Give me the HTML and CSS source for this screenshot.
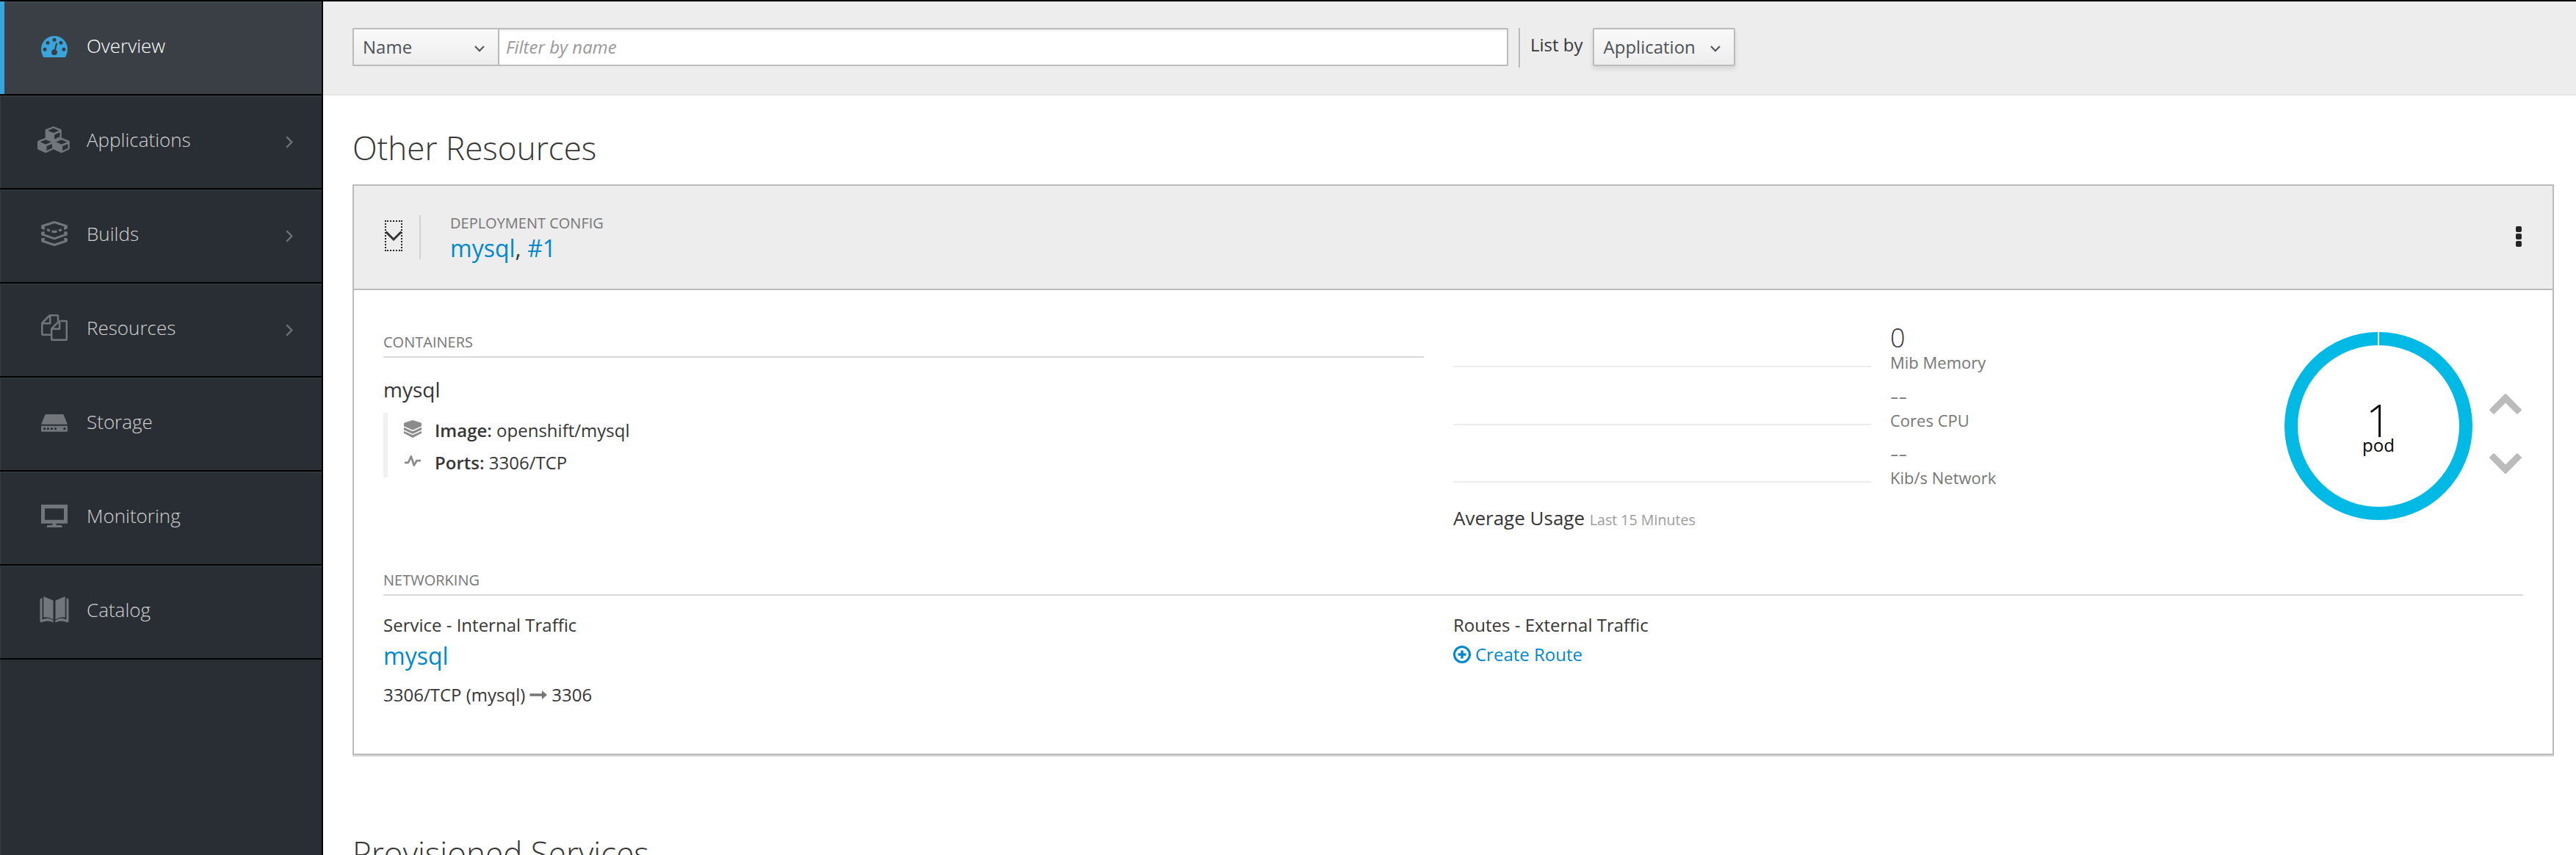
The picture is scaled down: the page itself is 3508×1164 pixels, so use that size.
FILE: index.html
```html
<!DOCTYPE html>
<html lang="en">
<head>
<meta charset="utf-8">
<title>Overview</title>
<link rel="stylesheet" href="styles.css">
</head>
<body>
<div class="app">
  <nav class="sidebar">
    <a class="nav-item active">
      <span class="nav-icon"><svg width="36" height="29" viewBox="0 0 36 29"><path fill="currentColor" fill-rule="evenodd" d="M18 0A18 18 0 0 1 36 18Q36 23.600 33.300 28.200Q32.800 29 32 29H4Q3.200 29 2.700 28.200Q0 23.600 0 18A18 18 0 0 1 18 0Z"/><g fill="#393f44"><circle cx="5.100" cy="18.300" r="2.500"/><circle cx="9" cy="9.200" r="2.500"/><circle cx="18" cy="5.300" r="2.500"/><circle cx="27" cy="9.200" r="2.500"/><circle cx="30.900" cy="18.300" r="2.500"/><circle cx="18" cy="22.200" r="3.900"/></g><path d="M18.400 21L21 10.500" stroke="#393f44" stroke-width="2.200" stroke-linecap="round"/></svg></span>
      <span class="nav-label">Overview</span>
    </a>
    <a class="nav-item">
      <span class="nav-icon cubes"><svg width="44" height="36" viewBox="0 0 44 36" fill="currentColor" fill-rule="evenodd"><path d="M11 .2Q11.500 0 12 .2L21.500 4Q22.500 4.500 22.500 5.500V14.500Q22.500 15.500 21.500 16L12.200 20.300Q11.500 20.500 10.800 20.300L1.200 16Q.3 15.500.3 14.500V5.500Q.3 4.500 1.300 4ZM11.500 2.600L3.900 5.700L11.500 8.900L19 5.700ZM12.800 11.500V17.400L20.200 14.100V8.300Z" transform="translate(10.300 0)"/><path d="M11 .2Q11.500 0 12 .2L21.500 4Q22.500 4.500 22.500 5.500V14.500Q22.500 15.500 21.500 16L12.200 20.300Q11.500 20.500 10.800 20.300L1.200 16Q.3 15.500.3 14.500V5.500Q.3 4.500 1.300 4ZM11.500 2.600L3.900 5.700L11.500 8.900L19 5.700ZM12.800 11.500V17.400L20.200 14.100V8.300Z" transform="translate(-.3 15.600)"/><path d="M11 .2Q11.500 0 12 .2L21.500 4Q22.500 4.500 22.500 5.500V14.500Q22.500 15.500 21.500 16L12.200 20.300Q11.500 20.500 10.800 20.300L1.200 16Q.3 15.500.3 14.500V5.500Q.3 4.500 1.300 4ZM11.500 2.600L3.900 5.700L11.500 8.900L19 5.700ZM12.800 11.500V17.400L20.200 14.100V8.300Z" transform="translate(21.300 15.600)"/></svg></span>
      <span class="nav-label">Applications</span>
      <svg class="nav-arrow" width="10" height="17" viewBox="0 0 10 17"><path d="M1.300 1.200L8.300 8.500L1.300 15.800"/></svg>
    </a>
    <a class="nav-item">
      <span class="nav-icon"><svg width="36" height="34" viewBox="0 0 36 34" fill="none" stroke="currentColor" stroke-width="3" stroke-linejoin="round"><path d="M4 9.200H1.600V6.800L18 1.500L34.400 6.800V9.200H32"/><path d="M2 9.800H5M34 9.800H31" stroke-width="3.600"/><path d="M8 11.700L12 12.900M14.500 13.700L17 14.600H19L21.500 13.700M24 12.900L28 11.700" stroke-width="3.200"/><path d="M4.800 15.800H1.600V18.200L18 23.800L34.400 18.200V15.800H31.200"/><path d="M4.800 24.600H1.600V27L18 32.500L34.400 27V24.600H31.200"/></svg></span>
      <span class="nav-label">Builds</span>
      <svg class="nav-arrow" width="10" height="17" viewBox="0 0 10 17"><path d="M1.300 1.200L8.300 8.500L1.300 15.800"/></svg>
    </a>
    <a class="nav-item">
      <span class="nav-icon"><svg width="36" height="36" viewBox="0 0 36 36" fill="none" stroke="currentColor" stroke-width="2.500" stroke-linejoin="round"><path d="M23 9V2.200Q23 1.300 22 1.300H13Q11.800 1.300 11 2L2 11Q1.300 11.800 1.300 13V27Q1.300 27.800 2.200 27.800H13M12.300 1.500V12.200H1.500"/><path d="M26.500 9H34Q34.800 9 34.800 10V34Q34.800 34.800 34 34.800H15Q14.200 34.800 14.200 34V20.500Q14.200 19.500 15 18.700L23.800 9.900Q24.700 9 25.800 9M25.100 9.500V19.800H14.500"/></svg></span>
      <span class="nav-label">Resources</span>
      <svg class="nav-arrow" width="10" height="17" viewBox="0 0 10 17"><path d="M1.300 1.200L8.300 8.500L1.300 15.800"/></svg>
    </a>
    <a class="nav-item">
      <span class="nav-icon low"><svg width="36" height="24" viewBox="0 0 36 24" fill="currentColor" fill-rule="evenodd"><path d="M6.600 0H29.400Q30.300 0 30.700.8L36 13.800H0L5.300.8Q5.700 0 6.600 0ZM0 15.800H36V22.500Q36 23.800 34.800 23.800H1.200Q0 23.800 0 22.500ZM3.200 18.300V21H6V18.300ZM8 18.300V21H10.800V18.300ZM13 18.300V21H15.800V18.300ZM18 18.300V21H20.800V18.300ZM30.300 18.300V21H33.500V18.300Z"/></svg></span>
      <span class="nav-label">Storage</span>
    </a>
    <a class="nav-item">
      <span class="nav-icon"><svg width="36" height="31" viewBox="0 0 36 31" fill="currentColor" fill-rule="evenodd"><path d="M0 0H36V25.800H20.500V28H27Q28.800 28 28.800 31H7.500Q7.500 28 9.300 28H15.500V25.800H0ZM5 5.300V20.800H31V5.300Z"/></svg></span>
      <span class="nav-label">Monitoring</span>
    </a>
    <a class="nav-item">
      <span class="nav-icon"><svg width="40" height="36" viewBox="0 0 40 36" fill="currentColor"><path d="M5.300 0L18.500 5.500V31.500Q12 27 5.300 28.500ZM34.700 0L21.500 5.500V31.500Q28 27 34.700 28.500Z"/><path d="M3.600 2.500V31.500Q12 27.500 18.700 32.800V35.600Q12 31.800 5 34.500Q3.500 35.500 1.500 35.300Q.5 35.200.5 34V3.800Q1.500 2.500 3.600 2.500ZM36.400 2.500V31.500Q28 27.500 21.300 32.800V35.600Q28 31.800 35 34.500Q36.500 35.500 38.500 35.300Q39.500 35.200 39.500 34V3.800Q38.500 2.500 36.400 2.500Z"/></svg></span>
      <span class="nav-label">Catalog</span>
    </a>
    <div class="nav-end"></div>
  </nav>

  <main class="content">
    <div class="toolbar">
      <div class="select name-select"><span>Name</span><svg width="14" height="9" viewBox="0 0 14 9"><path d="M1 1L7 7.300L13 1"/></svg></div>
      <div class="filter">Filter by name</div>
      <div class="separator"></div>
      <label class="list-by">List by</label>
      <div class="select app-select"><span>Application</span><svg width="14" height="9" viewBox="0 0 14 9"><path d="M1 1L7 7.300L13 1"/></svg></div>
    </div>

    <h2 class="heading">Other Resources</h2>

    <section class="card">
      <header class="card-head">
        <div class="toggle"><svg width="24" height="14" viewBox="0 0 24 14"><path d="M1.500 1.500L12 12L22.500 1.500"/></svg></div>
        <div class="title-block">
          <div class="kind">Deployment Config</div>
          <div class="title"><a>mysql</a>, <a>#1</a></div>
        </div>
        <div class="kebab"><i></i><i></i><i></i></div>
      </header>

      <div class="card-body">
        <div class="summary">
          <div class="containers">
            <h4 class="section-label">Containers</h4>
            <div class="container-name">mysql</div>
            <div class="details">
              <div class="detail">
                <svg class="image-icon" width="24" height="24" viewBox="0 0 24 24" fill="currentColor"><path d="M12 0L23.200 3.400Q24 3.700 24 4.500V8.200L12 13.500L0 8.200V4.500Q0 3.700.8 3.400Z"/><path d="M0 9.800L12 15.200L24 9.800V13.200L12 18.700L0 13.200Z"/><path d="M0 14.900L12 20.300L24 14.900V17.800L12 24L0 17.800Z"/></svg>
                <span><b>Image:</b> openshift/mysql</span>
              </div>
              <div class="detail">
                <svg class="port-icon" width="24" height="18" viewBox="0 0 24 18" fill="none" stroke="currentColor" stroke-width="2.700" stroke-linejoin="round"><path d="M1 10.800H6L9.800 2.500L13.800 14.500L17.500 8.200H23"/></svg>
                <span><b>Ports:</b> 3306/TCP</span>
              </div>
            </div>
          </div>

          <div class="metrics">
            <div class="metric first"><div class="spark"></div><div><div class="value">0</div><div class="unit">Mib Memory</div></div></div>
            <div class="metric"><div class="spark"></div><div><div class="value none">--</div><div class="unit">Cores CPU</div></div></div>
            <div class="metric last"><div class="spark"></div><div><div class="value none">--</div><div class="unit">Kib/s Network</div></div></div>
            <div class="usage">Average Usage <small>Last 15 Minutes</small></div>
          </div>

          <div class="pods">
            <div class="donut">
              <svg class="ring" width="256" height="256" viewBox="0 0 256 256"><circle cx="128" cy="128" r="119" fill="none" stroke="#00b9e4" stroke-width="18"/><path d="M128 0V20" stroke="#fff" stroke-width="2"/></svg>
              <div class="pod-text"><div class="pod-count">1</div><div class="pod-label">pod</div></div>
            </div>
            <div class="scale">
              <svg width="44" height="28" viewBox="0 0 44 28"><path d="M20.900.6Q22-.4 23.100.6L43.400 20.900Q44.400 22 43.400 23.100L39.100 27.200Q38 28.200 36.900 27.200L22 12.500L7.100 27.200Q6 28.200 4.900 27.200L.6 23.100Q-.4 22 .6 20.900Z"/></svg>
              <svg class="down" width="44" height="28" viewBox="0 0 44 28"><path d="M20.900.6Q22-.4 23.100.6L43.400 20.900Q44.400 22 43.400 23.100L39.100 27.200Q38 28.200 36.900 27.200L22 12.500L7.100 27.200Q6 28.200 4.900 27.200L.6 23.100Q-.4 22 .6 20.900Z"/></svg>
            </div>
          </div>
        </div>

        <h4 class="section-label">Networking</h4>
        <div class="network">
          <div class="service">
            <div class="net-title">Service - Internal Traffic</div>
            <div class="service-name"><a>mysql</a></div>
            <div class="ports">3306/TCP (mysql) <svg width="24" height="12" viewBox="0 0 24 12"><path fill="#767676" d="M.5 4.300H17V0L24 6L17 12V7.700H.5Z"/></svg> 3306</div>
          </div>
          <div class="routes">
            <div class="net-title">Routes - External Traffic</div>
            <a class="create"><svg width="24" height="24" viewBox="0 0 24 24" fill="none" stroke="currentColor"><circle cx="12" cy="12" r="10.500" stroke-width="3"/><path d="M12 6.500V17.500M6.500 12H17.500" stroke-width="3.400"/></svg><span>Create Route</span></a>
          </div>
        </div>
      </div>
    </section>

    <h2 class="heading next">Provisioned Services</h2>
  </main>
</div>
</body>
</html>
```
FILE: styles.css
```css
* { box-sizing: border-box; }
body {
  margin: 0;
  background: #fff;
  color: #363636;
  font-family: "Open Sans", "Noto Sans", sans-serif;
  font-size: 24px;
  line-height: 36px;
}
h2, h4 { margin: 0; font-weight: 400; }
a { color: #0088ce; text-decoration: none; }
svg { display: block; flex: none; }
.app { display: flex; height: 1164px; overflow: hidden; }

/* Sidebar */
.sidebar {
  width: 440px;
  flex: none;
  background: #292e34;
  border-right: 2px solid #030303;
  box-shadow: inset 1px 0 #363c41;
}
.nav-item {
  display: flex;
  align-items: center;
  height: 128px;
  padding: 0 39px 6px 52px;
  border-top: 2px solid #030303;
  box-shadow: inset 0 2px #31363c, inset 1px 0 #363c41;
  color: #d1d1d1;
  font-size: 26px;
  font-weight: 300;
}
.nav-item.active {
  color: #fff;
  background: #393f44;
  box-shadow: inset 6px 0 #39a5dc, inset 0 2px #40464c;
}
.nav-icon {
  width: 44px;
  margin-right: 22px;
  display: flex;
  justify-content: center;
  color: #72767b;
}
.active .nav-icon { color: #39a5dc; padding-top: 3px; }
.nav-icon.cubes { margin-left: -1px; margin-right: 23px; }
.nav-icon.low { padding-top: 4px; }
.nav-label { flex: 1; }
.nav-arrow { margin-top: 6px; fill: none; stroke: #72767b; stroke-width: 2.300; }
.nav-end { height: 2px; background: #030303; }

/* Toolbar */
.content { flex: 1; min-width: 0; }
.toolbar {
  display: flex;
  height: 130px;
  padding: 36px 40px 0;
  background: #ededed;
  border-top: 2px solid #030303;
  border-bottom: 2px solid #e4e4e4;
}
.select {
  display: flex;
  justify-content: space-between;
  align-items: center;
  height: 52px;
  border: 2px solid #bbb;
  background: linear-gradient(#fafafa, #ededed);
  color: #4d5258;
}
.select svg { fill: none; stroke: currentColor; stroke-width: 2; margin-top: 5px; }
.name-select { width: 198px; padding: 0 18px 0 12px; border-right: 0; border-radius: 2px 0 0 2px; }
.filter {
  width: 1376px;
  height: 52px;
  padding: 0 9px;
  border: 2px solid #bbb;
  border-radius: 0 2px 2px 0;
  background: #fff;
  box-shadow: inset 0 2px 2px rgba(3, 3, 3, .075);
  color: #999;
  font-style: italic;
  line-height: 48px;
}
.separator { width: 2px; height: 54px; margin: 0 14px; background: #bbb; }
.list-by { line-height: 46px; }
.app-select {
  width: 194px;
  margin-left: 13px;
  padding: 0 18px 0 13px;
  border-radius: 2px;
  box-shadow: 0 4px 6px rgba(3, 3, 3, .1);
}

.heading {
  margin: 41px 0 20px 40px;
  font-size: 44px;
  font-weight: 300;
  line-height: 60px;
}
.heading.next { margin-top: 103px; }

/* Card */
.card {
  margin: 0 30px 0 40px;
  border: 2px solid #bbb;
  box-shadow: 0 2px #d9d9d9;
}
.card-head {
  display: flex;
  align-items: center;
  height: 142px;
  padding: 0 42px;
  background: #ededed;
  border-bottom: 2px solid #bbb;
}
.toggle {
  width: 24px;
  height: 42px;
  border: 2px dotted #222;
  display: flex;
  align-items: center;
  justify-content: center;
  margin-top: -4px;
}
.toggle svg { fill: none; stroke: #333; stroke-width: 3; }
.title-block { margin-left: 23px; border-left: 2px solid #d1d1d1; padding: 2px 0 0 40px; height: 60px; display: flex; flex-direction: column; justify-content: center; }
.kind { font-size: 20px; line-height: 28px; color: #767676; text-transform: uppercase; }
.title { font-size: 32px; line-height: 40px; }
.kebab { display: flex; flex-direction: column; gap: 2px; margin: -2px 0 0 auto; }
.kebab i { width: 8px; height: 8px; border-radius: 2px; background: #252525; }

.card-body { height: 631px; padding: 44px 40px 0; }
.summary { display: flex; height: 336px; }
.section-label {
  padding: 1px 0 5px;
  border-bottom: 2px solid #d9d9d9;
  font-size: 20px;
  line-height: 28px;
  color: #767676;
  text-transform: uppercase;
}
.containers { width: 1417px; padding-top: 12px; }
.container-name { margin-top: 23px; font-size: 28px; line-height: 40px; }
.details { margin-top: 12px; border-left: 6px solid #f1f1f1; padding-left: 22px; }
.detail { display: flex; align-items: center; gap: 18px; height: 44px; }
.detail svg { color: #8b8b8b; }
.detail span { padding-top: 3px; }
.detail b { font-weight: 600; }

.metrics { width: 740px; margin-left: 40px; }
.metric { display: flex; align-items: flex-end; height: 79px; }
.metric.first { height: 69px; }
.metric.last { height: 78px; }
.spark { width: 569px; height: 2px; margin: 0 26px 8px 0; background: #ededed; }
.value { height: 39px; font-size: 36px; font-weight: 300; line-height: 42px; }
.value.none { color: #767676; }
.unit { font-size: 22px; line-height: 30px; color: #767676; }
.usage { margin-top: 22px; font-size: 26px; }
.usage small { font-size: 19.600px; color: #9c9c9c; }

.pods { display: flex; margin: 13px 2px 0 auto; }
.donut { display: grid; width: 256px; height: 256px; }
.donut > * { grid-area: 1 / 1; }
.pod-text { text-align: center; color: #030303; padding-top: 97px; }
.pod-count { font-size: 60px; font-weight: 300; line-height: 47px; }
.pod-label { line-height: 20px; }
.scale { margin: 84px 0 0 23px; display: flex; flex-direction: column; gap: 53px; }
.scale svg { fill: #bbb; }
.scale .down { transform: rotate(180deg); }

.network { display: flex; padding-top: 22px; }
.service { width: 1457px; }
.service-name { margin-top: 4px; font-size: 32px; line-height: 40px; }
.ports { display: flex; align-items: center; gap: 6px; margin-top: 15px; }
.create { display: flex; align-items: center; gap: 6px; margin-top: 4px; }
```
